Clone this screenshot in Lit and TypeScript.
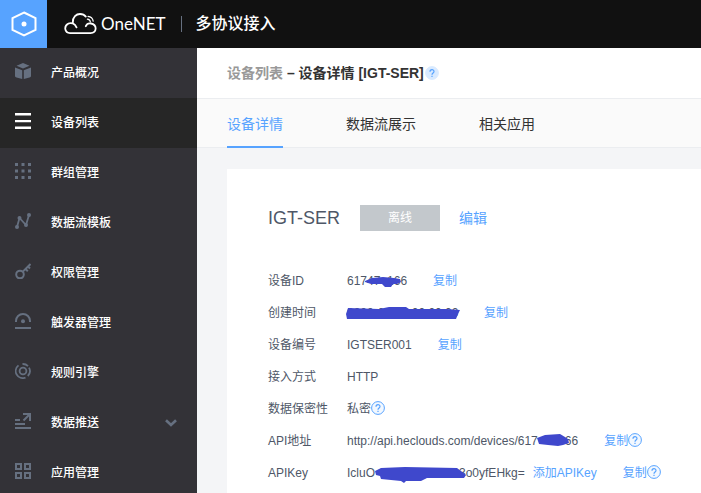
import { LitElement, html, svg, css, nothing, TemplateResult } from "lit";
import { customElement } from "lit/decorators.js";
import { classMap } from "lit/directives/class-map.js";

interface NavItem {
  label: string;
  icon: TemplateResult;
  active?: boolean;
  expandable?: boolean;
}

const squares = (xs: number[], size: number) =>
  xs.map((y) => xs.map((x) => svg`<rect x=${x} y=${y} width=${size} height=${size} />`));

const icons = {
  box: svg`<path fill="currentColor" d="M8 0 14.5 2.7 8 5.4 1.5 2.7ZM0 4.4 7.2 7.2V16L1.5 14.6Q0 14 0 13ZM16 4.4 8.8 7.2V16L14.5 14.6Q16 14 16 13Z" />`,
  list: svg`<path fill="currentColor" d="M0 0H16V2.4H0ZM0 7H16V9.2H0ZM0 13.6H16V16H0Z" />`,
  dots: svg`<g fill="currentColor">${squares([0, 6.5, 13], 3)}</g>`,
  stream: svg`<path fill="none" stroke="currentColor" stroke-width="1.8" d="M2 14 4.5 5 11 12 14 2" /><g fill="currentColor"><circle cx="2" cy="14" r="2" /><circle cx="4.5" cy="5" r="2" /><circle cx="11" cy="12" r="2" /><circle cx="14" cy="2" r="2" /></g>`,
  key: svg`<g fill="none" stroke="currentColor" stroke-width="2"><circle cx="5" cy="11.5" r="3.8" /><path d="M7.8 8.6 15.5 1M10.5 6 12.8 8.2M13 3.5 15 5.5" /></g>`,
  trigger: svg`<path fill="none" stroke="currentColor" stroke-width="2" d="M1 9V8A7 7 0 0 1 15 8V9M0 15H16" /><circle cx="8" cy="8.2" r="2" fill="currentColor" />`,
  engine: svg`<g fill="none" stroke="currentColor" stroke-width="1.8"><circle cx="8" cy="8" r="3.4" /><path d="M3.5 2.4A7.1 7.1 0 0 0 10.5 14.6M7.5 1A7.1 7.1 0 0 1 13 3.1M14 4.6A7.1 7.1 0 0 1 12.8 13" /></g>`,
  push: svg`<path fill="none" stroke="currentColor" stroke-width="2" d="M0 7H5M0 11H10M0 15H16M8 1H15V8M15 1 8.5 7.5" />`,
  apps: svg`<g fill="none" stroke="currentColor" stroke-width="2"><path d="M1 1H6V6H1ZM10 1H15V6H10ZM1 10H6V15H1ZM10 10H15V15H10Z" /></g>`,
};

const nav: NavItem[] = [
  { label: "产品概况", icon: icons.box },
  { label: "设备列表", icon: icons.list, active: true },
  { label: "群组管理", icon: icons.dots },
  { label: "数据流模板", icon: icons.stream },
  { label: "权限管理", icon: icons.key },
  { label: "触发器管理", icon: icons.trigger },
  { label: "规则引擎", icon: icons.engine },
  { label: "数据推送", icon: icons.push, expandable: true },
  { label: "应用管理", icon: icons.apps },
];

const help = (solid = false) => html`<button class=${classMap({ help: true, solid })} aria-label="帮助">
  <svg width="14" height="14" viewBox="0 0 14 14" aria-hidden="true">
    <circle class="ring" cx="7" cy="7" r="6.4" />
    <path class="mark" d="M5 5.7C5 3 9 3 9 5.5C9 7 7 7 7 8.7M7 9.8V11" />
  </svg>
</button>`;

const copy = () => html`<button class="link copy">复制</button>`;

// Scribbles that hide private characters of a value.
const scribble = (w: number, d: string) => html`<svg class="scribble" width=${w} height="18" viewBox="0 0 ${w} 18" aria-hidden="true">
  <path fill="#3f48cc" d=${d} />
</svg>`;

@customElement("app-root")
export class AppRoot extends LitElement {
  static styles = css`
    :host {
      display: block;
      min-height: 100vh;
      background: #f4f5f7;
      color: #4e5767;
      font: 12px/16px "Liberation Sans", "Noto Sans CJK SC", sans-serif;
    }
    * { box-sizing: border-box; }
    button { border: 0; padding: 0; background: none; font: inherit; cursor: pointer; }
    a { color: inherit; text-decoration: none; }
    svg { display: block; flex: none; }
    h1, h2, dl, dd { margin: 0; font: inherit; }

    .top { display: flex; align-items: center; height: 48px; background: #111; color: #fff; }
    .home { display: grid; place-items: center; width: 47px; height: 48px; background: #57a3ff; }
    .logo { display: flex; align-items: center; gap: 4px; margin-left: 17px; font: 17px/24px Lato, sans-serif; }
    .product { margin-left: 15px; padding-left: 15px; position: relative; font-size: 16px; line-height: 24px; font-weight: 500; }
    .product::before { content: ""; position: absolute; left: 0; top: 4px; width: 1px; height: 16px; background: #667080; }

    .body { display: flex; min-height: calc(100vh - 48px); }
    .side { flex: none; width: 197px; background: #333237; height: calc(100vh - 48px); overflow: hidden; }
    .item { display: flex; align-items: center; height: 50px; padding: 0 20px 0 15px; color: #fff; font-weight: 500; }
    .item.active { background: #262626; }
    .item > .icon { color: #667080; margin: 0 20px 4px 0; }
    .item.active > .icon { color: #fff; }
    .chev { margin-left: auto; }

    .main { flex: 1; min-width: 0; }
    .crumbs { display: flex; align-items: center; height: 51px; padding: 0 30px; border-bottom: 1px solid #ebedf0; background: #fff; color: #333; font-size: 14px; font-weight: 700; }
    .crumbs a { color: #999; }
    .crumbs span { white-space: pre; }
    .tabs { display: flex; gap: 63px; height: 49px; padding: 0 30px; border-bottom: 1px solid #ebedf0; background: #fafafa; color: #333; font-size: 14px; }
    .tab { height: 49px; line-height: 50px; white-space: nowrap; }
    .tab.on { color: #57a3ff; border-bottom: 2px solid #57a3ff; }

    .card { margin: 21px 0 0 30px; padding: 33px 0 0 41px; min-height: 324px; background: #fff; }
    .head { display: flex; align-items: center; height: 32px; margin-bottom: 31px; }
    .name { width: 92px; font-size: 18px; }
    .state { width: 80px; height: 26px; line-height: 26px; background: #c3c8cc; color: #fff; text-align: center; margin-right: 19px; }
    .link { color: #57a3ff; white-space: nowrap; }
    .head .link { font-size: 14px; }
    .row { display: flex; align-items: center; height: 32px; white-space: nowrap; }
    .row dt { width: 79px; }
    .row dd { display: flex; align-items: center; }
    .copy { margin-left: 26px; }
    .add { margin-left: 8px; }

    .help { display: block; margin-bottom: 2px; white-space: normal; }
    .ring { fill: #f2f8ff; stroke: #57a3ff; stroke-width: 1; }
    .mark { fill: none; stroke: #57a3ff; stroke-width: 1.2; }
    .solid { margin: 0; padding-left: 1px; }
    .solid .ring { fill: #d9eaff; stroke: #d9eaff; }

    .hidden { position: relative; display: inline-block; height: 16px; vertical-align: top; }
    .w-id { width: 20px; }
    .w-date { width: 111px; }
    .w-url { width: 27px; }
    .w-key { width: 84px; }
    .scribble { position: absolute; left: -8px; top: 0; }
  `;

  private renderItem(item: NavItem) {
    return html`<a href="#" class=${classMap({ item: true, active: !!item.active })}>
      <svg class="icon" width="16" height="16" viewBox="0 0 16 16" aria-hidden="true">${item.icon}</svg>
      <span>${item.label}</span>
      ${item.expandable
        ? html`<svg class="chev" width="12" height="8" viewBox="0 0 12 8" aria-hidden="true">
            <path fill="none" stroke="#667080" stroke-width="2.6" d="M1 1.2 6 6 11 1.2" />
          </svg>`
        : nothing}
    </a>`;
  }

  private renderRow(label: string, content: TemplateResult) {
    return html`<div class="row"><dt>${label}</dt><dd>${content}</dd></div>`;
  }

  render() {
    return html`
      <header class="top">
        <a class="home" href="#" aria-label="首页">
          <svg width="26" height="26" viewBox="0 0 26 26" aria-hidden="true">
            <path fill="none" stroke="#fff" stroke-width="2" d="M13 1.5 24.5 7.2V18.8L13 24.5 1.5 18.8V7.2Z" />
            <circle cx="13" cy="13" r="2.5" fill="#fff" />
          </svg>
        </a>
        <a class="logo" href="#">
          <svg width="33" height="22" viewBox="0 0 33 22" aria-hidden="true">
            <g fill="none" stroke="#fff" stroke-width="1.8" stroke-linecap="round">
              <path d="M12.5 14.3C10.8 10.2 7 9.4 4.5 10.5C-.5 13 .5 20.1 6 20.1H26.5C33 20.1 33.5 11.8 27 10.5C24.5 10 22.5 11.5 21.8 13.2" />
              <path d="M8.8 9.5C8.5 4 12.5 1 16 1C19 1 20.6 2 21.8 3.6" />
              <path stroke-width="1.2" d="M23.4 6.2Q26 6.4 26.4 9M24 3.4Q28.5 3.8 29.2 8.2" />
            </g>
          </svg>
          <span>OneNET</span>
        </a>
        <span class="product">多协议接入</span>
      </header>
      <div class="body">
        <nav class="side">${nav.map((item) => this.renderItem(item))}</nav>
        <main class="main">
          <h1 class="crumbs"><a href="#">设备列表</a><span> – 设备详情 [IGT-SER]</span>${help(true)}</h1>
          <nav class="tabs">
            <a class="tab on" href="#">设备详情</a>
            <a class="tab" href="#">数据流展示</a>
            <a class="tab" href="#">相关应用</a>
          </nav>
          <section class="card">
            <div class="head">
              <h2 class="name">IGT-SER</h2>
              <span class="state">离线</span>
              <button class="link">编辑</button>
            </div>
            <dl>
              ${this.renderRow("设备ID", html`<span>617<span class="hidden w-id">47${scribble(44, "M6 8 13 5 24 4 35 5 41 6 42 9 38 11 34 11 32 14 26 14 23 11 12 11 6 9Z")}</span>166</span>${copy()}`)}
              ${this.renderRow("创建时间", html`<span class="hidden w-date">0000-00-00 00:00:00${scribble(122, "M9 3 40 4 50 2 67 2 70 4 108 4 121 5 119 9 117 14 8 14 7 9Z")}</span>${copy()}`)}
              ${this.renderRow("设备编号", html`<span>IGTSER001</span>${copy()}`)}
              ${this.renderRow("接入方式", html`<span>HTTP</span>`)}
              ${this.renderRow("数据保密性", html`<span>私密</span>${help()}`)}
              ${this.renderRow("API地址", html`<span>http://api.heclouds.com/devices/617<span class="hidden w-url">${scribble(42, "M7 5 15 2 30 1 35 4 38 6 39 10 33 12 28 13 18 12 9 11Z")}</span>66</span>${copy()}${help()}`)}
              ${this.renderRow("APIKey", html`<span>IcluO<span class="hidden w-key">${scribble(106, "M8 6 14 3 38 2 90 3 94 6 99 10 97 13 60 13 54 16 39 16 37 18 34 16 14 14 13 11 9 10Z")}</span>3o0yfEHkg=</span><button class="link add">添加APIKey</button>${copy()}${help()}`)}
            </dl>
          </section>
        </main>
      </div>
    `;
  }
}
